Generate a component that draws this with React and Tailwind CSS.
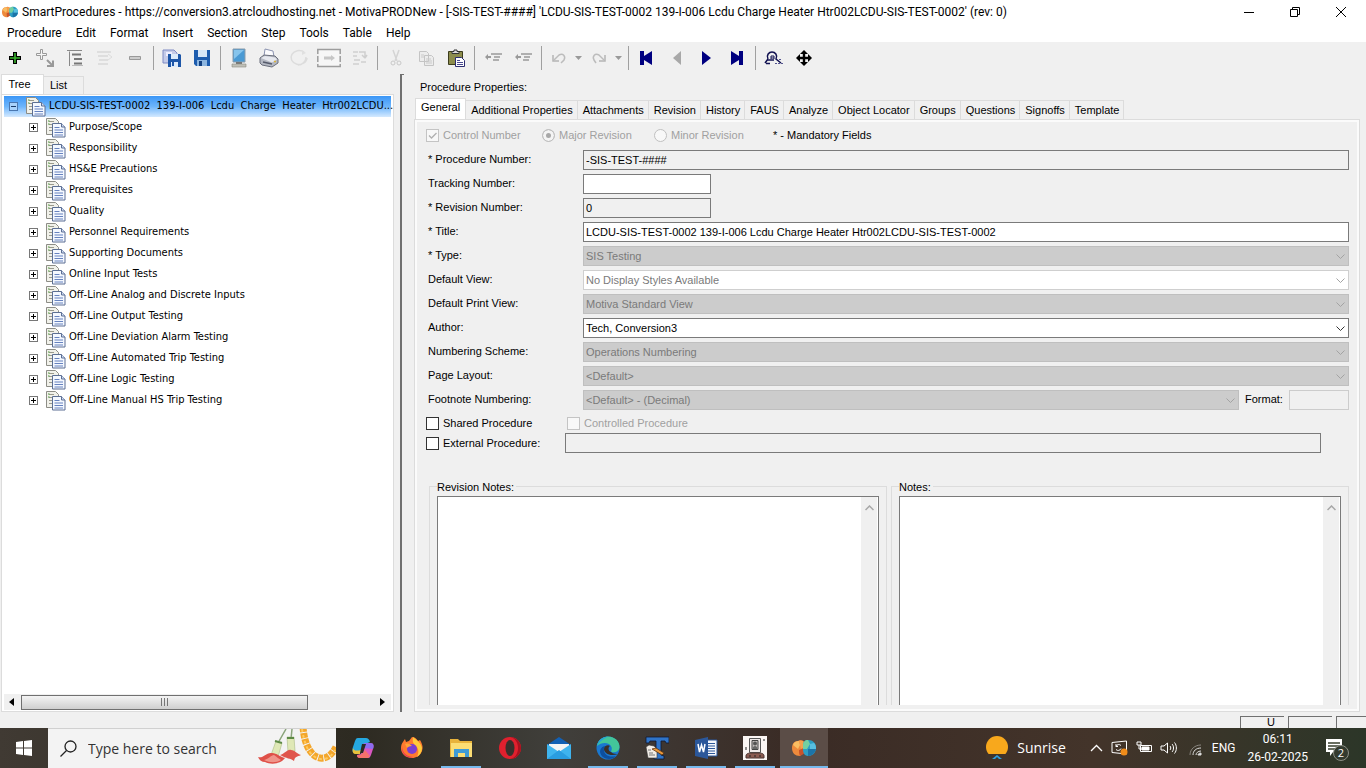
import React from 'react';

const menuItems = ['Procedure', 'Edit', 'Format', 'Insert', 'Section', 'Step', 'Tools', 'Table', 'Help'];

const treeItems = [
  'Purpose/Scope',
  'Responsibility',
  'HS&E Precautions',
  'Prerequisites',
  'Quality',
  'Personnel Requirements',
  'Supporting Documents',
  'Online Input Tests',
  'Off-Line Analog and Discrete Inputs',
  'Off-Line Output Testing',
  'Off-Line Deviation Alarm Testing',
  'Off-Line Automated Trip Testing',
  'Off-Line Logic Testing',
  'Off-Line Manual HS Trip Testing',
];

const propertyTabs = [
  'Additional Properties',
  'Attachments',
  'Revision',
  'History',
  'FAUS',
  'Analyze',
  'Object Locator',
  'Groups',
  'Questions',
  'Signoffs',
  'Template',
];

const AppLogo = ({ size }) => (
  <svg width={size} height={size} viewBox="0 0 24 24" aria-hidden="true" className="shrink-0">
    <path d="M0 12c0-4 2-7 6-7l2-1c3 0 5 2 6 5l-1 7-5 4c-5 0-8-3-8-8z" fill="#ee8a3c" />
    <path d="M1 9c1-3 3-4 6-4l1 4-2 4z" fill="#f9bd62" />
    <path d="m7 5 4 0 3 5-5 3z" fill="#f5a04c" />
    <path d="m7 14 5-2 1 5-5 3c-1-2-1-4-1-6z" fill="#c9522a" />
    <path d="M11 9c0-3 2-5 5-5 5 0 8 3 8 8 0 5-4 8-8 8-3 0-5-3-5-6z" fill="#2d9fc4" />
    <path d="M11 9c0-3 2-5 5-5l2 4-3 5h-4z" fill="#74cfa0" />
    <path d="m18 8 4-1c2 2 2 4 2 6h-6z" fill="#58bfe0" />
    <path d="m16 13 8 0c-1 4-4 7-8 7z" fill="#1c74a8" />
  </svg>
);

const TitleBar = () => (
  <header className="flex h-6 items-center bg-white text-xs text-black">
    <div className="flex min-w-0 flex-1 items-center gap-1 pl-0.5">
      <AppLogo size={16} />
      <h1 className="truncate whitespace-nowrap">
        SmartProcedures - https://conversion3.atrcloudhosting.net - MotivaPRODNew - [-SIS-TEST-####] 'LCDU-SIS-TEST-0002 139-I-006 Lcdu Charge Heater Htr002LCDU-SIS-TEST-0002' (rev: 0)
      </h1>
    </div>
    <button aria-label="Minimize" className="flex h-6 w-[46px] items-center justify-center">
      <svg width="12" height="12" stroke="#000" fill="none"><path d="M1 6.500h10" /></svg>
    </button>
    <button aria-label="Restore" className="flex h-6 w-[46px] items-center justify-center">
      <svg width="12" height="12" stroke="#000" fill="none"><path d="M1.500 3.500h7v7h-7zM3.500 3.500v-2h7v7h-2" /></svg>
    </button>
    <button aria-label="Close" className="mr-0.5 flex h-6 w-[46px] items-center justify-center">
      <svg width="12" height="12" stroke="#000" fill="none"><path d="m1 1 10 10M11 1 1 11" /></svg>
    </button>
  </header>
);

const MenuBar = () => (
  <nav className="flex h-[18px] items-center gap-[14px] bg-white pl-[7px] text-xs">
    {menuItems.map((item) => (
      <button key={item}>{item}</button>
    ))}
  </nav>
);

const ToolButton = ({ label, children }) => (
  <button aria-label={label} className="flex h-7 w-[30px] items-center justify-center">
    <svg width="24" height="20" viewBox="0 0 24 20" fill="none">{children}</svg>
  </button>
);

const DropArrow = ({ label }) => (
  <button aria-label={label} className="flex h-7 w-3.5 items-center justify-center">
    <svg width="7" height="4"><path d="M0 0h7L3.500 4z" fill="#999" /></svg>
  </button>
);

const Separator = () => <div className="mx-[3px] h-6 w-px bg-[#a0a0a0]" />;

const Toolbar = () => (
  <div className="flex h-8 items-center">
    <ToolButton label="Add">
      <path d="M12 4v12M6 10h12" stroke="#000" strokeWidth="4" />
      <path d="M12 5v10M7 10h10" stroke="#39b52c" strokeWidth="1.6" />
    </ToolButton>
    <ToolButton label="Add child">
      <path d="M7.500 1.500h2v4h4v2h-4v4h-2v-4h-4v-2h4z" stroke="#999" fill="#f6f6f6" />
      <path d="m14 12 5 5M20 12.500V18h-6" stroke="#999" strokeWidth="2" />
    </ToolButton>
    <ToolButton label="Outline">
      <path d="M4 2.500h15M6.500 3.500V18" stroke="#888" />
      <path d="M9 6.500h9M11 11h8M11 15.500h8" stroke="#777" strokeWidth="2" />
      <path d="M9 17.500h11" stroke="#bbb" />
    </ToolButton>
    <ToolButton label="Copy outline">
      <path d="M4 4h14M5 8h10M6 12h9M5 16h10" stroke="#dedede" strokeWidth="2" />
      <path d="m15 6 4 3-4 3" stroke="#ddd" />
    </ToolButton>
    <ToolButton label="Remove">
      <path d="M6.500 8.500h11v3h-11z" stroke="#999" fill="#ccc" />
    </ToolButton>
    <Separator />
    <ToolButton label="Save all">
      <path d="M3 2h11l3 3v10H3z" fill="#c5cbe8" stroke="#7f8bc4" />
      <path d="M6 4h6v4H6z" fill="#eef" />
      <path d="M8 6h12l1 1v12H8z" fill="#1d56a8" />
      <path d="M11 6h7v5h-7zM11 14h7v5h-7z" fill="#dceafa" />
      <path d="M12 14h2v4h-2z" fill="#1d56a8" />
    </ToolButton>
    <ToolButton label="Save">
      <path d="M4 2h16v16H6l-2-2z" fill="#1d5cae" />
      <path d="M8 2h9v7H8z" fill="#d6e6f7" />
      <path d="M7 12h10v6H7z" fill="#8db6e0" />
      <path d="M9 13h3v5H9z" fill="#123f80" />
    </ToolButton>
    <Separator />
    <ToolButton label="Preview">
      <path d="M6 1h12v13H6z" fill="#4a9ad4" stroke="#8a9cab" />
      <path d="M7 2h10l-10 9z" fill="#86c4ec" />
      <path d="M9 14h6v2H9z" fill="#777" />
      <path d="M5 16h14v3H5z" fill="#c0c0b8" stroke="#8b8b80" strokeWidth=".6" />
    </ToolButton>
    <ToolButton label="Print">
      <path d="m8 1 8 2 1 6-10-1z" fill="#fbfbfd" stroke="#8b93b0" />
      <path d="m3 10 4-3 11 1 3 3v4l-6 4-10-2-2-2z" fill="#b4b8c2" stroke="#6b6f7c" />
      <path d="m4 10 4-2 10 1.500 2 2-5 3z" fill="#e6e8ee" />
      <path d="m6 14 9 2" stroke="#555b6b" strokeWidth="1.500" />
      <path d="M17 13.500h2" stroke="#d8b03a" strokeWidth="1.500" />
    </ToolButton>
    <ToolButton label="Refresh">
      <path d="M17 4a8 7 0 1 0 3 6M19 9c0 5-4 8-8 8" stroke="#dcdcdc" strokeWidth="1.500" />
      <path d="m15 2 4 3-4 2z" fill="#e0e0e0" />
    </ToolButton>
    <ToolButton label="Attach view">
      <path d="M.8 1.500h22.400v17H.8z" stroke="#9d9d9d" fill="#f6f6f6" strokeWidth="1.500" />
      <path d="M7 8.500h7V7l4 3-4 3v-1.500H7z" fill="#c6c6c6" />
      <path d="M1 6v2M23 6v2M1 14v2M23 14v2" stroke="#f0f0f0" strokeWidth="2" />
    </ToolButton>
    <ToolButton label="Sync">
      <path d="M6 4h5M6 8h4M6 16h6M14 14h5" stroke="#d8d8d8" strokeWidth="2" />
      <path d="M12 4h6v5M18 10l-3-3M18 10l2-3M7 12h6" stroke="#cecece" strokeWidth="1.500" />
    </ToolButton>
    <Separator />
    <ToolButton label="Cut">
      <path d="m9 2 4 11M15 2l-4 11" stroke="#d4d4d4" strokeWidth="1.500" />
      <circle cx="9" cy="15" r="2" stroke="#c8c8c8" />
      <circle cx="15" cy="15" r="2" stroke="#c8c8c8" />
    </ToolButton>
    <ToolButton label="Copy">
      <path d="M5.500 3.500h7l2 2v8h-9zM10.500 7.500h7l2 2v8h-9z" stroke="#c4c4c4" fill="#ececec" />
      <path d="M12 11h5M12 13h6M12 15h6M7 7h3M7 9h3" stroke="#cacaca" />
    </ToolButton>
    <ToolButton label="Paste">
      <path d="M4.500 3.500h14v13h-14z" fill="#8c8c4c" stroke="#3c3c1c" />
      <path d="M8 5.500V3.500h2V2h3v1.500h2v2z" fill="#ddd" stroke="#333" />
      <path d="M11.500 9.500h6l3 3v6h-9z" fill="#fff" stroke="#2c2c70" />
      <path d="M13 12.500h3M13 14.500h6M13 16.500h6" stroke="#4a4a90" />
    </ToolButton>
    <Separator />
    <ToolButton label="Outdent">
      <path d="m4 9 3-3v2h3v2H7v2z" fill="#999" />
      <path d="M10 6h11M13 9h6M12 12h6" stroke="#999" strokeWidth="1.500" />
    </ToolButton>
    <ToolButton label="Indent">
      <path d="m4 9 3-3v2h3v2H7v2z" fill="#999" />
      <path d="M10 6h11M13 9h6M12 12h6" stroke="#999" strokeWidth="1.500" />
    </ToolButton>
    <Separator />
    <div className="flex w-10 items-center">
      <ToolButton label="Undo">
        <path d="M6 7v6h6" stroke="#b4b4b4" strokeWidth="1.500" />
        <path d="m7 12 5-5c4-2 7 1 5 5l-3 3" stroke="#bcbcbc" strokeWidth="1.500" />
      </ToolButton>
      <DropArrow label="Undo list" />
    </div>
    <div className="flex w-10 items-center">
      <ToolButton label="Redo">
        <path d="M18 7v6h-6" stroke="#b4b4b4" strokeWidth="1.500" />
        <path d="m17 12-5-5c-4-2-7 1-5 5l2 3" stroke="#bcbcbc" strokeWidth="1.500" />
      </ToolButton>
      <DropArrow label="Redo list" />
    </div>
    <Separator />
    <ToolButton label="First"><path d="M5 3h4v5l8-5v14l-8-5v5H5z" fill="#000080" /></ToolButton>
    <ToolButton label="Previous"><path d="M16 3v14L8 10z" fill="#a8a8a8" /></ToolButton>
    <ToolButton label="Next"><path d="M7 3v14l9-7z" fill="#000080" /></ToolButton>
    <ToolButton label="Last"><path d="M18 3h-4v5L6 3v14l8-5v5h4z" fill="#000080" /></ToolButton>
    <Separator />
    <ToolButton label="Find object">
      <path d="M6 11c-2-4 1-7 4-7s6 3 4 7l5 4" stroke="#101050" strokeWidth="1.500" />
      <path d="M9 11V8h3v3M9 10h3" stroke="#101050" />
      <path d="m6 11-3 4M4 15.500h4M6 12h6" stroke="#101050" strokeWidth="1.500" />
      <path d="M13 15.500h8M17 11.500h3" stroke="#555590" strokeDasharray="2 1" />
    </ToolButton>
    <ToolButton label="Move">
      <path d="M12 4v12M6 10h12" stroke="#000" strokeWidth="2.400" />
      <path d="m12 2 4 4H8zM12 18l4-4H8zM4 10l4-4v8zM20 10l-4-4v8z" fill="#000" />
    </ToolButton>
  </div>
);

const DocIcon = () => (
  <svg width="20" height="20" viewBox="0 0 20 20" aria-hidden="true" className="shrink-0">
    <path d="M.5.500h9l3 3v13H.5z" fill="#f1f1ea" stroke="#8d8d86" />
    <path d="M3 3.500h5M3 6.500h3M3 9.500h3M3 12.500h3" stroke="#9a9a8e" />
    <path d="M2 3h1.500M2 6h1.500" stroke="#4c9a3a" />
    <path d="M6.500 5.500h9l3.500 3.500v10H6.500z" fill="#f4f8ff" stroke="#5c6f94" />
    <path d="M15.500 5.500V9H19" fill="#cfdcf2" stroke="#5c6f94" />
    <path d="M8.500 9.500h5M8.500 12h8.500M8.500 14.500h8.500M8.500 17h8.500" stroke="#6682bf" />
  </svg>
);

const Expander = ({ open }) => (
  <button aria-label={open ? 'Collapse' : 'Expand'} className="shrink-0">
    <svg width="9" height="9" fill="none" stroke={open ? '#4a77b0' : '#777'}>
      <rect x=".5" y=".5" width="8" height="8" fill={open ? '#a8d2fb' : '#fff'} />
      <path d={open ? 'M2 4.500h5' : 'M2 4.500h5M4.500 2v5'} stroke={open ? '#1a3a66' : '#000'} />
    </svg>
  </button>
);

const TreePanel = () => (
  <aside className="flex w-[394px] shrink-0 flex-col pl-px font-['DejaVu_Sans_Condensed','DejaVu_Sans',sans-serif] text-[11px]">
    <div className="flex h-5 items-end font-['Liberation_Sans',sans-serif]">
      <button className="h-5 w-[43px] border border-b-0 border-[#dcdcdc] bg-white pr-1.5">Tree</button>
      <button className="h-[18px] w-10 border border-b-0 border-l-0 border-[#dcdcdc] pr-2.5">List</button>
    </div>
    <div className="flex flex-1 flex-col border border-[#dcdcdc] bg-white px-0.5 pt-px pb-px">
      <ul className="flex-1">
        <li className="flex h-[21px] items-center gap-2 bg-linear-to-b from-[#3a96f6] via-[#6cb5fb] to-[#d4e9fe] pl-[5px]">
          <Expander open />
          <span className="flex items-center gap-[3px] whitespace-pre">
            <DocIcon />
            {'LCDU-SIS-TEST-0002  139-I-006  Lcdu  Charge  Heater  Htr002LCDU...'}
          </span>
        </li>
        {treeItems.map((item) => (
          <li key={item} className="flex h-[21px] items-center gap-2 pl-[25px]">
            <Expander />
            <span className="flex items-center gap-[3px] whitespace-nowrap">
              <DocIcon />
              {item}
            </span>
          </li>
        ))}
      </ul>
      <div className="flex h-4 items-center bg-[#f0f0f0]">
        <svg width="17" height="8"><path d="M10 0v8L5 4z" fill="#000" /></svg>
        <div className="flex h-[15px] w-[287px] items-center justify-center gap-0.5 border border-[#707070] bg-linear-to-b from-[#f4f4f4] to-[#cfcfcf]">
          <i className="h-2 w-px bg-[#777]" />
          <i className="h-2 w-px bg-[#777]" />
          <i className="h-2 w-px bg-[#777]" />
        </div>
        <div className="flex-1" />
        <svg width="17" height="8"><path d="M6 0v8l5-4z" fill="#000" /></svg>
      </div>
    </div>
  </aside>
);

const Check = ({ label, checked, disabled, className = '' }) => (
  <label className={`flex items-center gap-1 whitespace-nowrap ${disabled ? 'text-[#a0a0a0]' : ''} ${className}`}>
    <span className="relative flex">
      <input
        type="checkbox"
        defaultChecked={checked}
        disabled={disabled}
        className="size-[13px] appearance-none border border-[#333] bg-white disabled:border-[#c4c4c4] disabled:bg-[#f8f8f8]"
      />
      {checked && (
        <svg width="13" height="13" className="pointer-events-none absolute inset-0" fill="none">
          <path d="m3 6.500 2.500 2.500L10.500 4" stroke="#b0b0b0" strokeWidth="1.300" />
        </svg>
      )}
    </span>
    {label}
  </label>
);

const Radio = ({ label, checked, className = '' }) => (
  <label className={`flex items-center gap-1 whitespace-nowrap text-[#a0a0a0] ${className}`}>
    <input
      type="radio"
      name="revisionType"
      defaultChecked={checked}
      disabled
      className="size-[13px] appearance-none rounded-full border border-[#c0c0c0] bg-[#f8f8f8] checked:bg-[#a8a8a8] checked:shadow-[inset_0_0_0_3px_#f4f4f4]"
    />
    {label}
  </label>
);

const TextRow = ({ id, label, value = '', readOnly, narrow }) => (
  <div className="flex h-5 items-center">
    <label htmlFor={id} className="w-[155px] shrink-0 pb-0.5">{label}</label>
    <input
      id={id}
      type="text"
      defaultValue={value}
      readOnly={readOnly}
      className={`h-5 border border-[#7a7a7a] px-0.5 ${narrow ? 'w-32' : 'min-w-0 flex-1'} ${readOnly ? 'bg-[#f0f0f0]' : 'bg-white'}`}
    />
  </div>
);

const selectStyles = {
  disabled: 'border-[#bfbfbf] bg-[#cccccc] text-[#7a7a7a]',
  empty: 'border-[#cfcfcf] bg-white text-[#7a7a7a]',
  active: 'border-[#7a7a7a] bg-white text-black',
};

const SelectRow = ({ id, label, value, kind = 'disabled', children }) => (
  <div className="flex h-5 items-center">
    <label htmlFor={id} className="w-[155px] shrink-0 pb-0.5">{label}</label>
    <div className="relative min-w-0 flex-1">
      <select
        id={id}
        disabled={kind !== 'active'}
        className={`block h-5 w-full appearance-none border px-0.5 opacity-100 ${selectStyles[kind]}`}
      >
        <option>{value}</option>
      </select>
      <svg width="9" height="6" className="pointer-events-none absolute top-2 right-1" fill="none">
        <path d="m.5.5 4 4 4-4" stroke={kind === 'active' ? '#333' : '#a3a3a3'} />
      </svg>
    </div>
    {children}
  </div>
);

const NotesBox = ({ id, label, className }) => (
  <fieldset className={`flex flex-col border border-b-0 border-[#dcdcdc] pr-[7px] pl-[7px] ${className}`}>
    <div className="-mt-2 flex h-4 items-center">
      <label htmlFor={id} className="bg-[#f0f0f0] pr-0.5">{label}</label>
    </div>
    <div className="mt-px flex flex-1 border border-b-0 border-[#7a7a7a] bg-white">
      <textarea id={id} className="min-w-0 flex-1 resize-none p-0.5 outline-none" />
      <div className="mr-px flex w-4 justify-center bg-[#f0f0f0] pt-2">
        <svg width="9" height="6" fill="none"><path d="m.5 5 4-4 4 4" stroke="#a8a8a8" strokeWidth="1.500" /></svg>
      </div>
    </div>
  </fieldset>
);

const PropertiesPanel = () => (
  <main className="flex min-w-0 flex-1 flex-col pr-1.5 pl-2.5 font-['Liberation_Sans',sans-serif] text-[11px]">
    <h2 className="flex h-6 items-center pt-0.5 pl-1.5">Procedure Properties:</h2>
    <div className="flex h-[21px] items-end pl-px">
      <button className="h-[21px] border border-b-0 border-[#dcdcdc] bg-white px-[5px] pb-1">General</button>
      {propertyTabs.map((tab) => (
        <button key={tab} className="h-[19px] border border-b-0 border-l-0 border-[#dcdcdc] pr-1 pl-[5px] whitespace-nowrap">
          {tab}
        </button>
      ))}
    </div>
    <div className="flex flex-1 flex-col border border-[#dcdcdc] pr-2.5 pb-1.5 pl-[13px] shadow-[inset_0_0_0_2px_#fbfbfb]">
      <div className="flex h-[30px] items-center">
        <Check label="Control Number" checked disabled className="-ml-0.5 w-[116px]" />
        <Radio label="Major Revision" checked className="w-28" />
        <Radio label="Minor Revision" className="w-[119px]" />
        <span>* - Mandatory Fields</span>
      </div>
      <form className="flex flex-col gap-1">
        <TextRow id="procNumber" label="* Procedure Number:" value="-SIS-TEST-####" readOnly />
        <TextRow id="tracking" label="Tracking Number:" narrow />
        <TextRow id="revNumber" label="* Revision Number:" value="0" readOnly narrow />
        <TextRow id="title" label="* Title:" value="LCDU-SIS-TEST-0002 139-I-006 Lcdu Charge Heater Htr002LCDU-SIS-TEST-0002" />
        <SelectRow id="type" label="* Type:" value="SIS Testing" />
        <SelectRow id="view" label="Default View:" value="No Display Styles Available" kind="empty" />
        <SelectRow id="printView" label="Default Print View:" value="Motiva Standard View" />
        <SelectRow id="author" label="Author:" value="Tech, Conversion3" kind="active" />
        <SelectRow id="scheme" label="Numbering Scheme:" value="Operations Numbering" />
        <SelectRow id="layout" label="Page Layout:" value="<Default>" />
        <SelectRow id="footnote" label="Footnote Numbering:" value="<Default> - (Decimal)">
          <label htmlFor="format" className="w-[50px] pb-0.5 pl-1.5">Format:</label>
          <input id="format" type="text" disabled className="h-5 w-[60px] border border-[#cccccc]" />
        </SelectRow>
      </form>
      <div className="mt-[3px] flex h-5 items-center">
        <Check label="Shared Procedure" className="-ml-0.5 w-[141px]" />
        <Check label="Controlled Procedure" disabled />
      </div>
      <div className="flex h-5 items-center pr-7">
        <Check label="External Procedure:" className="-ml-0.5 w-[139px]" />
        <input type="text" readOnly aria-label="External procedure" className="h-5 min-w-0 flex-1 border border-[#7a7a7a]" />
      </div>
      <div className="mt-[33px] flex flex-1 gap-1">
        <NotesBox id="revisionNotes" label="Revision Notes:" className="ml-px flex-1" />
        <NotesBox id="notes" label="Notes:" className="flex-1" />
      </div>
    </div>
  </main>
);

const StatusBar = () => (
  <div className="flex h-4 items-end justify-end gap-1 font-['Liberation_Sans',sans-serif] text-[11px] leading-[10px]">
    <div className="h-3 w-11 overflow-hidden border-t border-l border-[#707070] pl-[26px]">U</div>
    <div className="h-3 w-11 border-t border-l border-[#707070]" />
    <div className="h-3 w-[30px] border-t border-l border-[#707070]" />
  </div>
);

const FlowerArt = () => (
  <svg width="80" height="40" viewBox="0 0 80 40" aria-hidden="true">
    <path d="M30 0 22 14M36 0l-1 10" stroke="#8aa47a" strokeWidth="1.500" fill="none" />
    <path d="m20 12 6 2-4 14-7-2z" fill="#dfe8b6" stroke="#a9bb83" strokeWidth=".6" />
    <path d="m31 8 7 0 1 14-7 1z" fill="#dfe8b6" stroke="#a9bb83" strokeWidth=".6" />
    <path d="m19 12 7 2M31 9h7" stroke="#5d8a46" strokeWidth="2" />
    <path d="M2 28c5 2 8-5 14-4 5 0 8 4 13 5-4 6-14 7-20 4-3 0-6-2-7-5z" fill="#df5048" />
    <path d="M8 31c5-1 7-5 10-5 3 2 5 4 7 5-5 3-11 3-17 0z" fill="#ef958a" />
    <path d="M24 26c5-1 7-6 11-5 4 0 6 4 10 5-4 2-6 1-7 6-4-3-7-2-14-6z" fill="#e0554c" />
    <path d="M47-2c1 12 4 23 12 29 8 5 16 1 21-9" fill="none" stroke="#f3a62b" strokeWidth="7" strokeDasharray="5 1" />
    <path d="M46 0c2 12 5 23 13 28 8 5 16 1 20-7" fill="none" stroke="#ffc95c" strokeWidth="2" strokeDasharray="3 3" />
  </svg>
);

const taskbarApps = [
  {
    name: 'Copilot',
    icon: (
      <>
        <path d="M7 2h8c2 0 3 1 4 4l-5 2-3 9H5c-4 0-4-3-3-6l2-6c1-2 1-3 3-3z" fill="#25a8e0" />
        <path d="M2 12c1 3 3 3 8 2l-1 4H5c-3 0-4-2-3-6z" fill="#e8c13c" />
        <path d="M17 22H9c-2 0-3-1-3-3l4-1 3-11h6c4 0 4 3 3 6l-2 6c-1 2-1 3-3 3z" fill="#d957c0" />
        <path d="M13 7h6c4 0 4 3 3 6l-10-1z" fill="#8c6cf0" />
        <path d="M6 19c3 1 6-1 8-5l5 6-2 2H9c-2 0-3-1-3-3z" fill="#f5716a" />
        <path d="m11 8 4 0-3 9H9z" fill="#2c2a22" />
      </>
    ),
  },
  {
    name: 'Firefox',
    icon: (
      <>
        <path d="M3 6c1-2 2-3 2-3l1 3 3-1 3-4c4 0 5 3 6 4l2-1c3 5 3 8 2 11-2 5-6 7-10 7C6 22 1 18 1 12c0-3 1-5 2-6z" fill="#ff7a2f" />
        <path d="M13 1c2 2 8 5 9 11 0 4-2 7-5 9 2-4 2-8-1-11-2-2-4-3-3-9z" fill="#ffcb3b" />
        <path d="M2 10c0 8 6 11 12 11-7 2-13-3-12-11z" fill="#e3305f" />
        <circle cx="12" cy="13" r="5" fill="#7b3fd0" />
        <path d="M5 8c3-1 5 0 7 2-3 0-4 1-5 2z" fill="#ffa436" />
      </>
    ),
  },
  {
    name: 'File Explorer',
    running: true,
    icon: (
      <>
        <path d="M1 3h8l2 2h12v16H1z" fill="#e8b33c" />
        <path d="M2 7h21v14H2z" fill="#fbdd74" />
        <path d="M5 13h15v8h-4v-4H9v4H5z" fill="#3f9bd6" />
      </>
    ),
  },
  {
    name: 'Opera',
    icon: (
      <>
        <circle cx="12" cy="12" r="11" fill="#e0202e" />
        <path d="M12 1c6 0 11 5 11 11s-5 11-11 11c5-1 8-5 8-11S17 2 12 1z" fill="#a8121f" />
        <ellipse cx="12" cy="12" rx="4.500" ry="8" fill="#39302c" />
      </>
    ),
  },
  {
    name: 'Mail',
    icon: (
      <>
        <path d="m0 9 12-8 12 8v13H0z" fill="#1260b4" />
        <path d="M2 8h20v9H2z" fill="#f4f4f4" />
        <path d="m0 8 12 8 12-8v15H0z" fill="#3fb4ee" />
        <path d="m0 23 12-9 12 9z" fill="#2a9de0" />
      </>
    ),
  },
  {
    name: 'Edge',
    running: true,
    icon: (
      <>
        <circle cx="12" cy="12" r="11.500" fill="#1a78cf" />
        <path d="M1 10C2 4 7 .5 12 .5c7 0 12 5 11.500 11-.5 4-4 5.500-8 4.500-1-1 1-2 0-5-2-5-10-5-14.500-1z" fill="#43c59a" />
        <path d="M1 10C2 4 7 .5 12 .5c-6 3-9 6-11 9.500z" fill="#25a5d6" />
        <path d="M8 12c-1 6 4 10 12 8-3 4-14 5-16-4 0-3 2-6 6-6z" fill="#0d4f9e" />
        <path d="M15 16c-3-1-3-5-1-6-2-2-6 0-6 3 0 4 6 8 14 5-2 0-5 0-7-2z" fill="#3a3029" />
      </>
    ),
  },
  {
    name: 'Text tool',
    running: true,
    icon: (
      <>
        <path d="M1 1h23v6h-3l-1-2h-4v14l3 1v3H9v-3l2-1V5H5L4 7H1z" fill="#2f74c8" stroke="#101830" strokeWidth=".8" />
        <path d="m1 11 3-2 5 1 3 3v9H3z" fill="#f2ede6" stroke="#333" strokeWidth=".6" />
        <path d="m7 13 4-1 8 5-2 2z" fill="#e8973a" stroke="#5b3210" strokeWidth=".8" />
        <path d="M3 14h3M4 17h4M4 19h6" stroke="#777" />
      </>
    ),
  },
  {
    name: 'Word',
    running: true,
    icon: (
      <>
        <path d="M12 4h11v16H12z" fill="#f4f7fc" stroke="#2b579a" />
        <path d="M14 7.500h7M14 10h7M14 12.500h7M14 15h7M14 17.500h7" stroke="#2b579a" />
        <path d="m1 4 13-3v22L1 20z" fill="#2b579a" />
        <path d="m4 8 1.500 8L7.500 9l2 7L11 8" stroke="#fff" strokeWidth="1.500" fill="none" />
      </>
    ),
  },
  {
    name: 'Viewer',
    running: true,
    icon: (
      <>
        <path d="M0 0h24v24H0z" fill="#fbf6f4" />
        <path d="M6.500 2.500h11v14h-11z" fill="#efe9e8" stroke="#555" />
        <path d="M9 4.500h6v9H9z" fill="#c5bfbe" stroke="#444" />
        <circle cx="12" cy="7.500" r="2" fill="#555" />
        <path d="M9.500 13c0-4 5-4 5 0z" fill="#666" />
        <path d="M3 20c0-3 3-3 9-3s9 0 9 3v2H3z" fill="#8a5a50" stroke="#4a3430" />
        <path d="M6 20h2M11 20h2M16 20h2M3 11v3M21 3v2" stroke="#222" />
      </>
    ),
  },
];

const Taskbar = () => (
  <footer className="flex h-10 items-center bg-[linear-gradient(to_right,#403a33_0%,#2d2a21_26%,#403f3b_41%,#3a2b25_58%,#43342a_80%,#2c3628_100%)] text-xs text-white">
    <button aria-label="Start" className="flex h-10 w-12 items-center justify-center">
      <svg width="16" height="16" fill="#fff"><path d="m0 2 7-1v6.500H0zM8 1l8-1v7.500H8zM0 8.500h7V15l-7-1zM8 8.500h8V16l-8-1z" /></svg>
    </button>
    <div className="flex h-10 w-72 items-center border-t border-[#d0d0d0] bg-[#f3f3f3] pl-3 text-[#333]">
      <svg width="17" height="17" fill="none" stroke="#222" strokeWidth="1.300" className="shrink-0">
        <circle cx="10.500" cy="6.500" r="5.500" />
        <path d="M6.500 10.500.5 16.500" />
      </svg>
      <input type="text" aria-label="Search" placeholder="Type here to search" className="ml-[11px] w-40 min-w-0 bg-transparent text-sm outline-none placeholder:text-[#333]" />
      <div className="ml-auto flex"><FlowerArt /></div>
    </div>
    <div className="ml-[3px] flex gap-px">
      {taskbarApps.map(({ name, icon, running }) => (
        <button key={name} aria-label={name} className="flex h-10 w-12 flex-col items-center justify-end">
          <svg width="24" height="24" viewBox="0 0 24 24" className="mb-1.5">{icon}</svg>
          <span className={`h-0.5 w-10 ${running ? 'bg-[#76b9ed]' : ''}`} />
        </button>
      ))}
      <button aria-label="SmartProcedures" className="flex h-10 w-12 flex-col items-center justify-end bg-[#5b4d47]">
        <span className="mb-1.5 flex"><AppLogo size={24} /></span>
        <span className="h-0.5 w-12 bg-[#76b9ed]" />
      </button>
    </div>
    <div className="ml-auto flex h-10 items-center">
      <button className="flex items-center gap-2 text-sm">
        <svg width="24" height="24">
          <circle cx="12" cy="11" r="11" fill="#f8a81c" />
          <path d="M1 18h22v6H1z" fill="#40332b" />
          <path d="m7 23 5-4 5 4h-3l-2-2-2 2z" fill="#2f9fe0" />
        </svg>
        Sunrise
      </button>
      <div className="ml-6 flex items-center gap-2">
        <svg width="13" height="16" fill="none" stroke="#fff" strokeWidth="1.300"><path d="m1 11 5.500-5.500L12 11" /></svg>
        <svg width="17" height="16" fill="none" stroke="#fff">
          <path d="M1 2.500 15.500 1v13L1 12.500z" />
          <path d="M10 5.500a3 3 0 0 0-5 1M5 9.500a3 3 0 0 0 5-1M5 4v2.500h2" />
          <circle cx="13" cy="12" r="3.500" fill="#f08c1a" stroke="none" />
        </svg>
        <svg width="16" height="16" fill="none" stroke="#fff">
          <path d="M4.500 5.500h11v6h-11z" />
          <path d="M6 7h7v3H6z" fill="#fff" />
          <path d="M1 2v3h4V2M3 5v4h3M2 1v2M4 1v2" />
        </svg>
        <svg width="18" height="16" fill="none" stroke="#fff">
          <path d="M1 6h3l3.500-3v10L4 10H1zM10 6c1 1 1 3 0 4M12 4c2 2 2 6 0 8M14.500 2.500c2.500 3 2.500 8 0 11" />
        </svg>
        <svg width="18" height="16" fill="none" stroke="#ddd">
          <path d="M4 15C4 9 9 5 15 5" stroke="#8a8680" />
          <path d="M7 15c0-4 3-7 8-7M10 15c0-2 2-4 5-4" />
          <path d="M12 15c0-1 1-2 3-2v2z" fill="#ddd" />
        </svg>
        <span className="font-['Roboto',sans-serif]">ENG</span>
      </div>
      <div className="ml-3 text-center font-['Roboto',sans-serif] leading-[18px]">
        <div>06:11</div>
        <div>26-02-2025</div>
      </div>
      <button aria-label="2 notifications" className="mr-4 ml-4 flex">
        <svg width="26" height="28">
          <path d="M2 5h16v13h-9l-3 4v-4H2z" fill="#fff" />
          <path d="M4 9h12M4 12h12M4 15h7" stroke="#39402f" strokeWidth="1.300" />
          <circle cx="17" cy="19" r="7.500" fill="#333a2e" stroke="#8c8f86" />
          <text x="17" y="23" textAnchor="middle" fontSize="11" fill="#fff">2</text>
        </svg>
      </button>
    </div>
  </footer>
);

const App = () => {
  return (
    <div className="flex min-h-screen flex-col bg-[#f0f0f0] font-['Open_Sans','Noto_Sans',sans-serif] text-black">
      <div className="font-['Roboto','Noto_Sans',sans-serif]">
        <TitleBar />
        <MenuBar />
      </div>
      <Toolbar />
      <div className="flex flex-1">
        <TreePanel />
        <div className="ml-1.5 w-1 border-t border-l-2 border-[#707070]" />
        <PropertiesPanel />
      </div>
      <StatusBar />
      <Taskbar />
    </div>
  );
};

export default App;
